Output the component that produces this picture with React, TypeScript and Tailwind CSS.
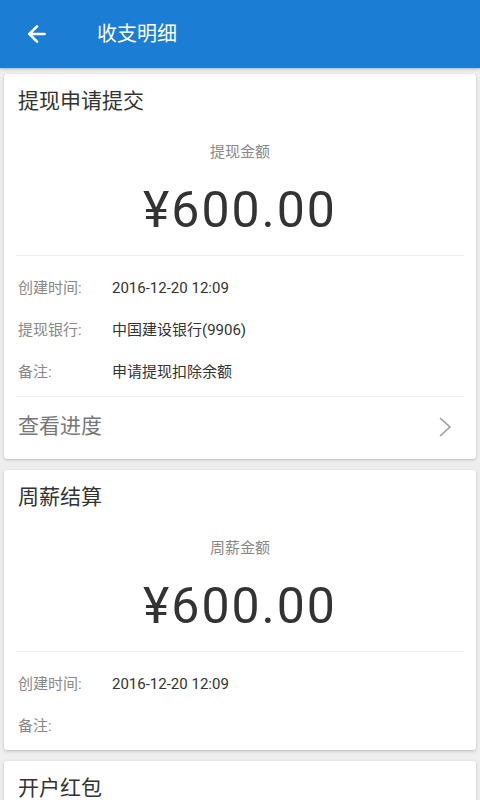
import { ArrowLeft } from 'lucide-react';

type Row = { label: string; value: string };

type Record = {
    title: string;
    amountLabel?: string;
    amount?: string;
    rows: Row[];
    progress?: boolean;
};

const records: Record[] = [
    {
        title: '提现申请提交',
        amountLabel: '提现金额',
        amount: '¥600.00',
        rows: [
            { label: '创建时间:', value: '2016-12-20 12:09' },
            { label: '提现银行:', value: '中国建设银行(9906)' },
            { label: '备注:', value: '申请提现扣除余额' },
        ],
        progress: true,
    },
    {
        title: '周薪结算',
        amountLabel: '周薪金额',
        amount: '¥600.00',
        rows: [
            { label: '创建时间:', value: '2016-12-20 12:09' },
            { label: '备注:', value: '' },
        ],
    },
    // only the title of the third record is on screen
    { title: '开户红包', rows: [] },
];

const font = "font-['Roboto','Noto_Sans_CJK_SC',sans-serif]";

function RecordCard({ rec }: { rec: Record }) {
    return (
        <div className="mx-[4px] bg-white rounded-[3px] shadow-[0_1px_3px_rgba(0,0,0,0.22)]">
            <div className="h-[56px] flex items-center px-[14px] text-[21px] text-[#333]">{rec.title}</div>
            {rec.amount && (
                <>
                    <div className="h-[44px] flex items-center justify-center text-[15px] text-[#888]">{rec.amountLabel}</div>
                    <div className="h-[72px] flex items-center justify-center text-[50px] text-[#333] tracking-[2px]">{rec.amount}</div>
                    <div className="h-[9px]" />
                    <div className="mx-[12px] border-t border-[#eeeeee]" />
                    <div className="pt-[11px] pb-[3px]">
                        {rec.rows.map((r) => (
                            <div key={r.label} className="h-[42px] flex items-center px-[14px] text-[15px]">
                                <span className="w-[94px] text-[#888]">{r.label}</span>
                                <span className="text-[#333]">{r.value}</span>
                            </div>
                        ))}
                    </div>
                </>
            )}
            {rec.progress && (
                <>
                    <div className="mx-[12px] border-t border-[#eeeeee]" />
                    <div className="h-[62px] pb-[3px] flex items-center justify-between px-[14px]">
                        <span className="text-[21px] text-[#777]">查看进度</span>
                        <svg width="14" height="22" viewBox="0 0 14 22" className="mr-[10px]">
                            <polyline points="2,2 12,11 2,20" fill="none" stroke="#9a9a9a" strokeWidth="1.5" />
                        </svg>
                    </div>
                </>
            )}
        </div>
    );
}

export default function App() {
    return (
        <div className={`${font} w-[480px] h-[800px] overflow-hidden bg-[#eeeeee]`}>
            <div className="h-[68px] bg-[#1c7dd5] flex items-center shadow-[0_1px_3px_rgba(0,0,0,0.25)]">
                <ArrowLeft size={26} strokeWidth={2.4} className="text-white ml-[24px]" />
                <span className="ml-[47px] text-[20px] text-white">收支明细</span>
            </div>
            <div className="pt-[6px] flex flex-col gap-[11px]">
                {records.map((rec) => (
                    <RecordCard key={rec.title} rec={rec} />
                ))}
            </div>
        </div>
    );
}
